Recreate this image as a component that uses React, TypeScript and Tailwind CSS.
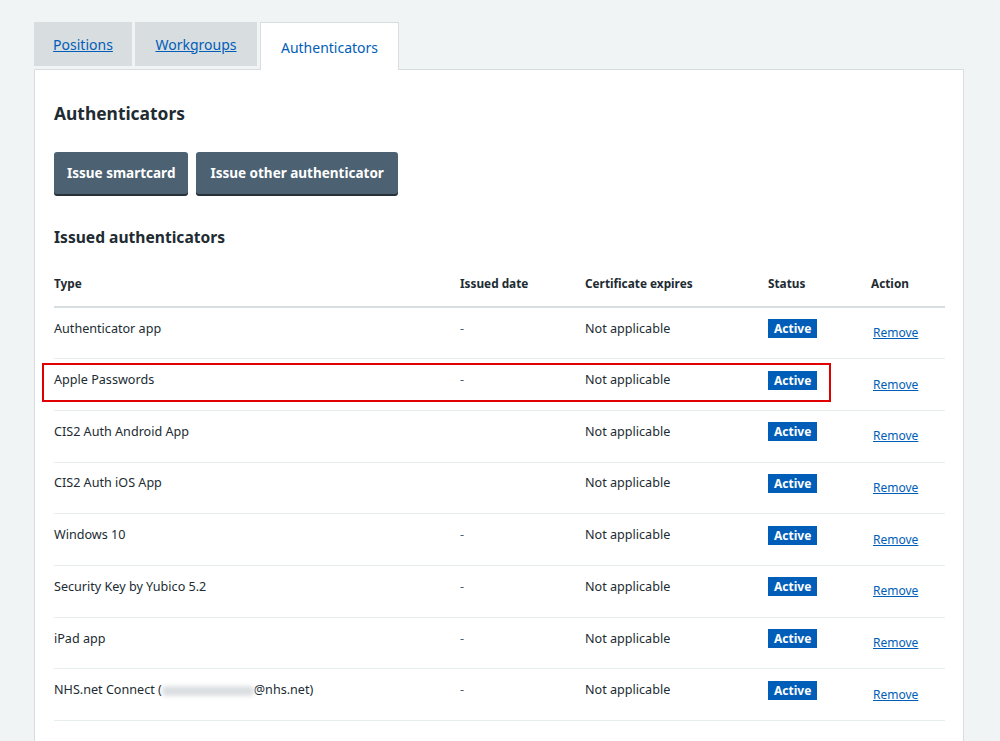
import React from "react";

const rows: { type: React.ReactNode; issued: string }[] = [
  { type: "Authenticator app", issued: "-" },
  { type: "Apple Passwords", issued: "-" },
  { type: "CIS2 Auth Android App", issued: "" },
  { type: "CIS2 Auth iOS App", issued: "" },
  { type: "Windows 10", issued: "-" },
  { type: "Security Key by Yubico 5.2", issued: "-" },
  { type: "iPad app", issued: "-" },
  {
    type: (
      <>
        NHS.net Connect (
        <span className="inline-block align-middle w-[92px] h-[10px] rounded-sm bg-[#dcdfe1] blur-[2px]" />
        @nhs.net)
      </>
    ),
    issued: "-",
  },
];

export default function App() {
  return (
    <div
      className="min-h-screen bg-[#f0f4f5] text-[#212b32] pl-[34px] pr-[36px] pt-[21px]"
      style={{ fontFamily: '"Noto Sans", "Open Sans", sans-serif' }}
    >
      {/* Tabs */}
      <div className="flex items-end gap-[3px] h-[48px]">
        <a className="w-[98px] h-[44px] mb-[3px] bg-[#d8dde0] flex items-center justify-center text-[14px] text-[#005eb8] underline">
          Positions
        </a>
        <a className="w-[122px] h-[44px] mb-[3px] bg-[#d8dde0] flex items-center justify-center text-[14px] text-[#005eb8] underline">
          Workgroups
        </a>
        <div className="relative z-10 w-[139px] h-[48px] -mb-px bg-white border border-b-0 border-[#d8dde0] flex items-center justify-center text-[14px] text-[#005eb8] pt-[1px]">
          Authenticators
        </div>
      </div>

      {/* Panel */}
      <div className="relative bg-white border border-[#d8dde0] px-[19px] pt-[31px] pb-[40px]">
        <h2 className="text-[17.4px] font-bold leading-[24px]">Authenticators</h2>

        <div className="flex gap-[8px] mt-[27px]">
          <button className="h-[42px] px-[13px] bg-[#4c6272] text-white text-[13.5px] font-bold rounded-[3px] shadow-[0_2px_0_#263139]">
            Issue smartcard
          </button>
          <button className="h-[42px] px-[14px] bg-[#4c6272] text-white text-[13.5px] font-bold rounded-[3px] shadow-[0_2px_0_#263139]">
            Issue other authenticator
          </button>
        </div>

        <h3 className="text-[15.6px] font-bold mt-[32px] leading-[22px]">Issued authenticators</h3>

        <table className="w-[891px] mt-[14px] border-collapse table-fixed text-[12.6px]">
          <colgroup>
            <col className="w-[406px]" />
            <col className="w-[125px]" />
            <col className="w-[183px]" />
            <col className="w-[103px]" />
            <col className="w-[74px]" />
          </colgroup>
          <thead>
            <tr className="border-b-2 border-[#d8dde0] text-left h-[45px]">
              <th className="font-bold text-[11.8px] p-0">Type</th>
              <th className="font-bold text-[11.8px] p-0">Issued date</th>
              <th className="font-bold text-[11.8px] p-0">Certificate expires</th>
              <th className="font-bold text-[11.8px] p-0">Status</th>
              <th className="font-bold text-[11.8px] p-0">Action</th>
            </tr>
          </thead>
          <tbody>
            {rows.map((r, i) => (
              <tr key={i} className="border-b border-[#e8edee] h-[51.7px]">
                <td className="p-0 pb-[8px]">{r.type}</td>
                <td className="p-0 pb-[8px] text-[#4c6272]">{r.issued}</td>
                <td className="p-0 pb-[8px]">Not applicable</td>
                <td className="p-0 pb-[8px]">
                  <span className="inline-block bg-[#005eb8] text-white text-[12px] font-bold leading-[19px] px-[6px]">
                    Active
                  </span>
                </td>
                <td className="p-0 pl-[2px] text-[12px]">
                  <a className="text-[#005eb8] underline">Remove</a>
                </td>
              </tr>
            ))}
          </tbody>
        </table>

        {/* annotation */}
        <div className="absolute left-[7px] top-[293px] w-[789px] h-[39px] border-2 border-[#e00000] pointer-events-none" />
      </div>
    </div>
  );
}
